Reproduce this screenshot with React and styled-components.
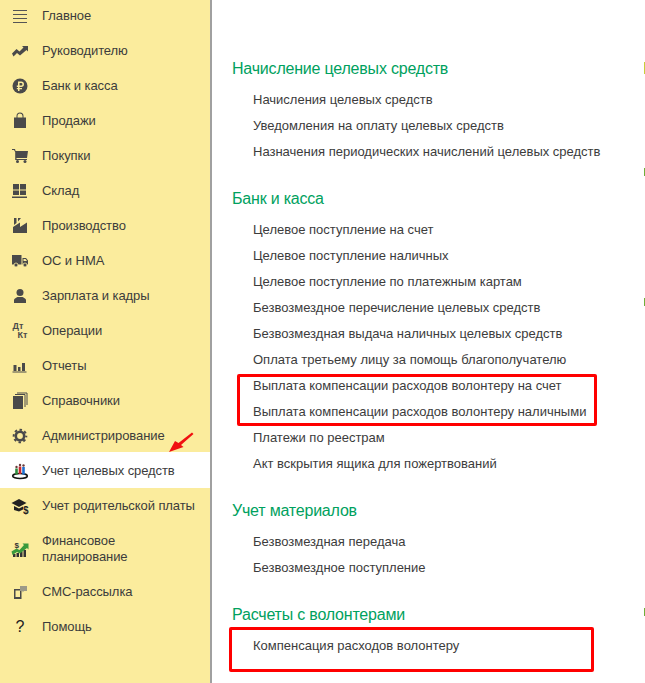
import React from "react";
import styled, { createGlobalStyle } from "styled-components";

const GlobalStyle = createGlobalStyle`
  html, body {
    margin: 0;
    height: 100%;
    overflow: hidden;
    background: #fff;
  }
`;

const Page = styled.div`
  display: flex;
  width: 645px;
  height: 683px;
  overflow: hidden;
  font-family: "Liberation Sans", Arial, sans-serif;
  font-size: 13px;
  color: #3c3c3c;
`;

const Sidebar = styled.nav`
  position: relative;
  flex: 0 0 210px;
  background: #fbec9d;
  border-right: 2px solid #a0a0a0;
`;

const MenuList = styled.div`
  display: flex;
  flex-direction: column;
  margin-top: -3px;
  letter-spacing: -0.08px;
`;

const MenuRow = styled.div`
  display: flex;
  align-items: center;
  gap: 13px;
  box-sizing: border-box;
  min-height: ${({ $tall }) => ($tall ? "51px" : "35px")};
  padding: 3px 0 0 11px;
  line-height: 16px;
  background: ${({ $active }) => ($active ? "#fff" : "transparent")};
  box-shadow: ${({ $active }) => ($active ? "0 1px 0 #fff" : "none")};
`;

const IconBox = styled.span`
  display: flex;
  align-items: center;
  justify-content: center;
  flex: 0 0 18px;
  width: 18px;
  height: 18px;
`;

const Content = styled.main`
  position: relative;
  flex: 1;
  padding: 60px 0 0 20px;
`;

const Group = styled.section`
  margin-bottom: 25px;
`;

const GroupTitle = styled.div`
  height: 18px;
  margin-bottom: 9px;
  font-size: 16px;
  line-height: 18px;
  letter-spacing: -0.2px;
  color: #00a15e;
`;

const GroupItem = styled.div`
  height: 26px;
  padding-left: 21px;
  line-height: 26px;
  white-space: nowrap;
`;

const RedFrame = styled.div`
  position: absolute;
  left: ${({ $left }) => $left}px;
  top: ${({ $top }) => $top}px;
  width: ${({ $width }) => $width}px;
  height: ${({ $height }) => $height}px;
  box-sizing: border-box;
  border: 3px solid #ff0000;
  border-radius: 2px;
`;

const ArrowMark = styled.svg`
  position: absolute;
  left: 166px;
  top: 432px;
`;

const EdgeMark = styled.div`
  position: absolute;
  right: 0;
  top: ${({ $top }) => $top}px;
  width: 1px;
  height: ${({ $height }) => $height}px;
  background: ${({ $color }) => $color};
`;

const DebitCredit = styled.span`
  display: block;
  width: 15px;
  font-size: 9px;
  font-weight: 700;
  line-height: 9px;
  letter-spacing: 0;
  color: #4a4a4a;
`;

const DebitLine = styled.span`
  display: block;
  text-align: ${({ $end }) => ($end ? "right" : "left")};
`;

const HelpMark = styled.span`
  font-size: 16px;
  color: #222;
`;

const Glyph = ({ children }) => (
  <svg width="18" height="18" viewBox="0 0 18 18" fill="#4a4a4a">
    {children}
  </svg>
);

const icons = {
  main: (
    <Glyph>
      <path d="M2 3h14v1H2zM2 7h14v1H2zM2 11h14v1H2zM2 15h14v1H2z" fill="#555" />
    </Glyph>
  ),
  chief: (
    <Glyph>
      <path d="M1 11.500l4.500-4.500 3 2.500 4-4L11 4h6v5.500L15.500 8 9 13.500l-3-2.500L2.500 14.500z" />
    </Glyph>
  ),
  bank: (
    <Glyph>
      <circle cx="9" cy="9" r="7.500" />
      <path
        d="M7 4.500h3.200a2.600 2.600 0 0 1 0 5.500H8.500v1H11v1.300H8.500V14H7v-1.700H5.800V11H7v-1H5.800V8.600H7zM8.500 5.900v2.700h1.600a1.350 1.350 0 0 0 0-2.700z"
        fill="#fbec9d"
        fillRule="evenodd"
      />
    </Glyph>
  ),
  sales: (
    <Glyph>
      <path
        d="M3 5.500h2.500V4a3.500 3.500 0 0 1 7 0v1.500H15V16H3zM6.500 5.500h5V4a2.500 2.500 0 0 0-5 0z"
        fillRule="evenodd"
      />
    </Glyph>
  ),
  buy: (
    <Glyph>
      <path d="M1 2h3l.6 2H17l-1 7H5.500v1H16v1H4.200V5L3 3H1z" />
      <circle cx="6.500" cy="14.500" r="1.500" />
      <circle cx="14" cy="14.500" r="1.500" />
    </Glyph>
  ),
  stock: (
    <Glyph>
      <path d="M2 2h6v5.500H2zM9 2h6v5.500H9zM2 8.500h6V13H2zM9 8.500h6V13H9zM1 14.500h15V16H1z" />
    </Glyph>
  ),
  factory: (
    <Glyph>
      <path d="M2 16V10l7-4.500V10l7-4.500V16zM3 1h2.500v5L3 8zM7 1h3L7 4.500z" />
    </Glyph>
  ),
  truck: (
    <Glyph>
      <path d="M1 3h9.500v9.500H1z" />
      <path
        d="M11.500 6H15l2 2.500v4h-5.500zM12.500 7v2H16l-1.500-2z"
        fillRule="evenodd"
      />
      <circle cx="5" cy="13" r="2" stroke="#fbec9d" strokeWidth="0.8" />
      <circle cx="14" cy="13" r="2" stroke="#fbec9d" strokeWidth="0.8" />
    </Glyph>
  ),
  staff: (
    <Glyph>
      <circle cx="9" cy="5.500" r="3.500" />
      <path d="M3 16v-3c0-1.500 2.500-2.500 3.500-3h5c1 .5 3.500 1.500 3.500 3v3z" />
    </Glyph>
  ),
  reports: (
    <Glyph>
      <path d="M2.500 8h3v6h-3zM7 10h2.500v4H7zM11 6h3v8h-3zM1.500 14.500h14v1h-14z" />
    </Glyph>
  ),
  refs: (
    <Glyph>
      <path d="M2 4h10v13H2z" />
      <path d="M4 2.500h10V15M6 1h10v12" fill="none" stroke="#4a4a4a" />
    </Glyph>
  ),
  admin: (
    <Glyph>
      <circle cx="9" cy="9" r="4.200" fill="none" stroke="#4a4a4a" strokeWidth="2.600" />
      <circle
        cx="9"
        cy="9"
        r="6.300"
        fill="none"
        stroke="#4a4a4a"
        strokeWidth="2"
        strokeDasharray="2.500 2.450"
        strokeDashoffset="1.250"
      />
    </Glyph>
  ),
  target: (
    <Glyph>
      <ellipse cx="9" cy="14" rx="7.300" ry="2.500" fill="none" stroke="#111" strokeWidth="1.600" />
      <circle cx="5.500" cy="5" r="1.200" fill="#6a3a3a" />
      <path d="M4.200 6.500h2.600v6H4.200z" fill="#2e8b3c" />
      <circle cx="9" cy="3" r="1.200" fill="#6a3a3a" />
      <path d="M7.700 4.500h2.600v7.500H7.700z" fill="#c8262c" />
      <circle cx="12.500" cy="3.500" r="1.200" fill="#6a3a3a" />
      <path d="M11.200 5h2.600v7.500h-2.600z" fill="#1c6fd0" />
    </Glyph>
  ),
  parent: (
    <Glyph>
      <path d="M.5 6L8 2l7.500 4L8 10z" fill="#222" />
      <path d="M3 9l5 2.500 4-2v3l-4 2-5-1.500z" fill="#222" />
      <text x="12" y="16.500" fontSize="10" fontWeight="700" fill="#222">$</text>
    </Glyph>
  ),
  plan: (
    <Glyph>
      <path d="M2 14h2.500v3H2zM5.500 13H8v4H5.500zM9 11.500h2.500V17H9zM12.500 10H15v7h-2.500z" fill="#333" />
      <path d="M.5 11.500l5-3 3 1.500 4.500-5L11.500 3.500H17.500V9.500L16 8l-7 5.500-3-1.500-4.500 3z" fill="#3a9a3c" />
      <text x="3.500" y="7.500" fontSize="8" fontWeight="700" fill="#333">$</text>
    </Glyph>
  ),
  sms: (
    <Glyph>
      <path d="M3 6h7.500v10H3zM4.500 7.500v6.500h4.500V7.500z" fillRule="evenodd" />
      <path d="M9 3h7v5h-3l-1.500 1.500V8H9z" fill="#9c9a88" />
    </Glyph>
  ),
};

const menu = [
  { label: "Главное", icon: icons.main },
  { label: "Руководителю", icon: icons.chief },
  { label: "Банк и касса", icon: icons.bank },
  { label: "Продажи", icon: icons.sales },
  { label: "Покупки", icon: icons.buy },
  { label: "Склад", icon: icons.stock },
  { label: "Производство", icon: icons.factory },
  { label: "ОС и НМА", icon: icons.truck },
  { label: "Зарплата и кадры", icon: icons.staff },
  {
    label: "Операции",
    icon: (
      <DebitCredit>
        <DebitLine>Дт</DebitLine>
        <DebitLine $end>Кт</DebitLine>
      </DebitCredit>
    ),
  },
  { label: "Отчеты", icon: icons.reports },
  { label: "Справочники", icon: icons.refs },
  { label: "Администрирование", icon: icons.admin },
  { label: "Учет целевых средств", icon: icons.target, active: true },
  { label: "Учет родительской платы", icon: icons.parent },
  { label: <>Финансовое<br />планирование</>, icon: icons.plan, tall: true },
  { label: "СМС-рассылка", icon: icons.sms },
  { label: "Помощь", icon: <HelpMark>?</HelpMark> },
];

const groups = [
  {
    title: "Начисление целевых средств",
    items: [
      "Начисления целевых средств",
      "Уведомления на оплату целевых средств",
      "Назначения периодических начислений целевых средств",
    ],
  },
  {
    title: "Банк и касса",
    items: [
      "Целевое поступление на счет",
      "Целевое поступление наличных",
      "Целевое поступление по платежным картам",
      "Безвозмездное перечисление целевых средств",
      "Безвозмездная выдача наличных целевых средств",
      "Оплата третьему лицу за помощь благополучателю",
      "Выплата компенсации расходов волонтеру на счет",
      "Выплата компенсации расходов волонтеру наличными",
      "Платежи по реестрам",
      "Акт вскрытия ящика для пожертвований",
    ],
  },
  {
    title: "Учет материалов",
    items: ["Безвозмездная передача", "Безвозмездное поступление"],
  },
  {
    title: "Расчеты с волонтерами",
    items: ["Компенсация расходов волонтеру"],
  },
];

export default function App() {
  return (
    <Page>
      <GlobalStyle />
      <Sidebar>
        <MenuList>
          {menu.map((row, i) => (
            <MenuRow key={i} $active={row.active} $tall={row.tall}>
              <IconBox>{row.icon}</IconBox>
              <span>{row.label}</span>
            </MenuRow>
          ))}
        </MenuList>
        <ArrowMark width="28" height="24" viewBox="0 0 28 24">
          <path d="M3 20L9 9l3.500 2L26 .5 27.500 2 15 13l2.500 2z" fill="#f01010" />
        </ArrowMark>
      </Sidebar>
      <Content>
        {groups.map((group) => (
          <Group key={group.title}>
            <GroupTitle>{group.title}</GroupTitle>
            {group.items.map((item) => (
              <GroupItem key={item}>{item}</GroupItem>
            ))}
          </Group>
        ))}
        <RedFrame $left={25} $top={374} $width={360} $height={52} />
        <RedFrame $left={17} $top={627} $width={365} $height={45} />
        <EdgeMark $top={62} $height={12} $color="#c6cf3a" />
        <EdgeMark $top={168} $height={8} $color="#6fae3a" />
        <EdgeMark $top={298} $height={8} $color="#6fae3a" />
        <EdgeMark $top={608} $height={8} $color="#6fae3a" />
      </Content>
    </Page>
  );
}
